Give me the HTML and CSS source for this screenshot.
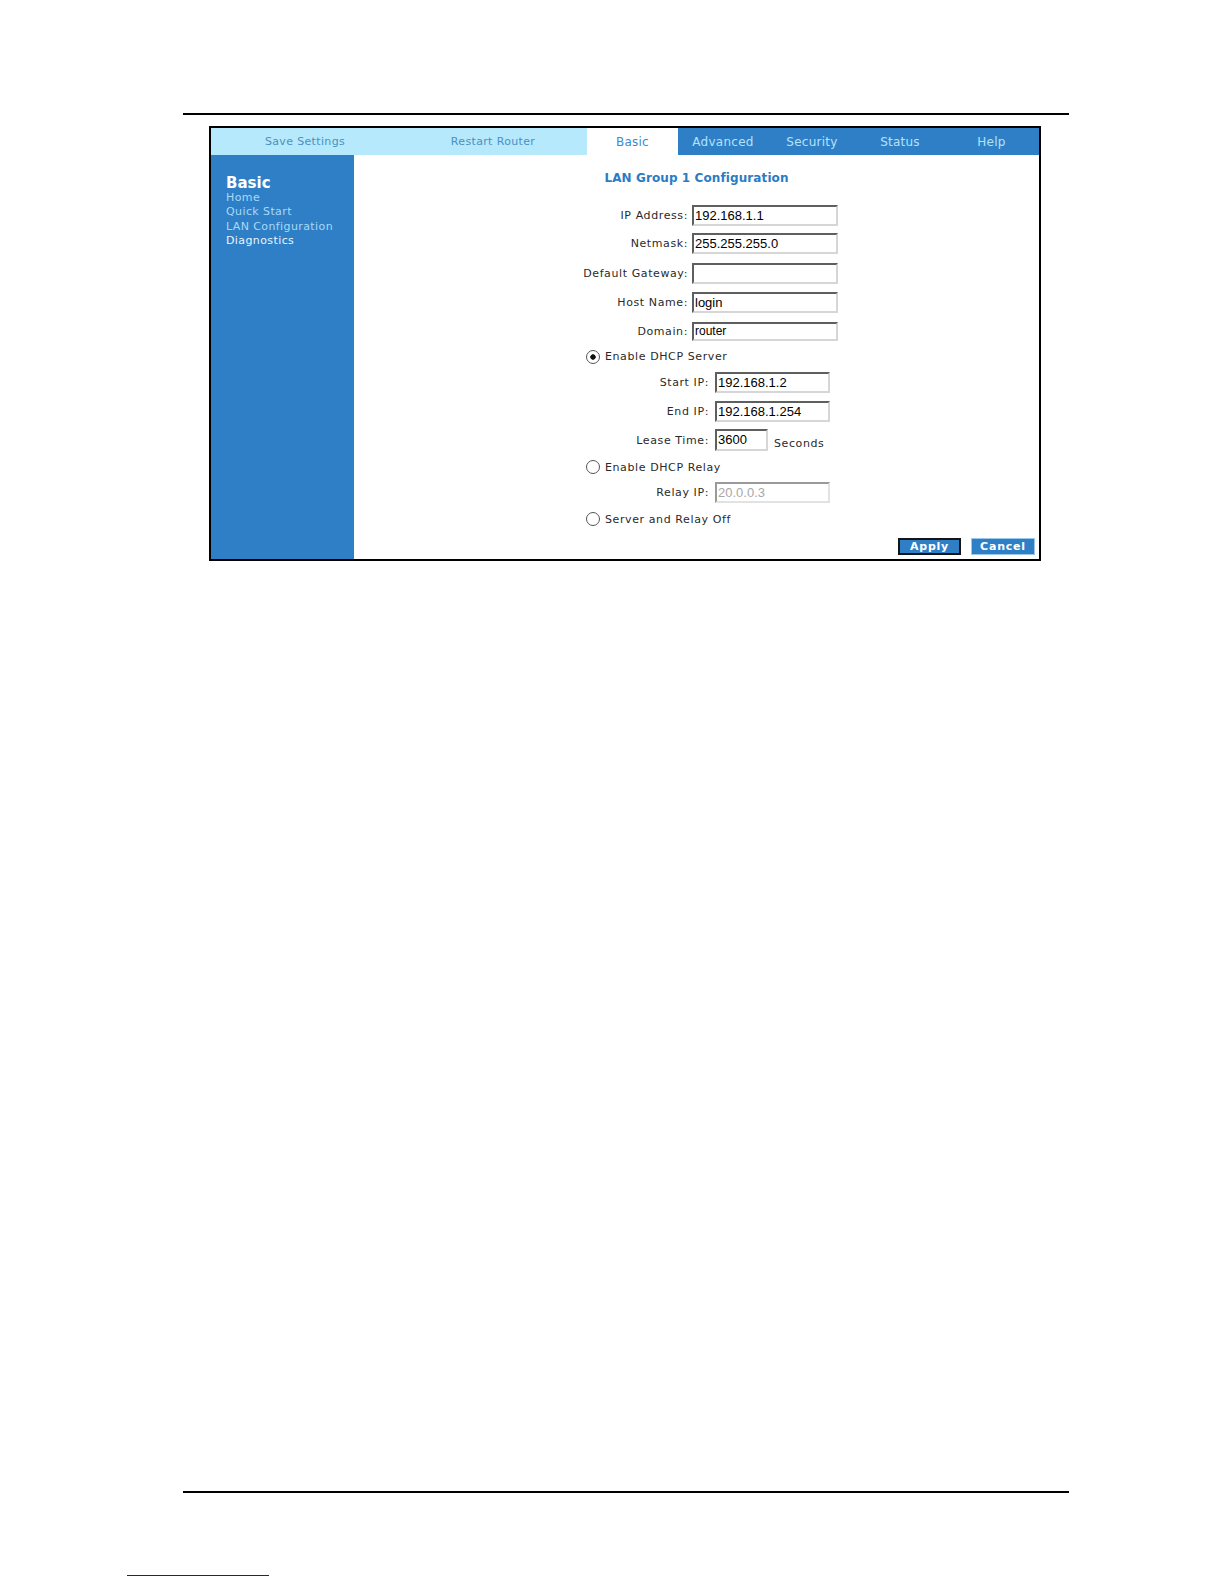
FILE: index.html
```html
<!DOCTYPE html>
<html>
<head>
<meta charset="utf-8">
<title>LAN Group 1 Configuration</title>
<link rel="stylesheet" href="styles.css">
</head>
<body>
<div class="page">
  <div class="rule top"></div>
  <div class="frame">
    <div class="tabs">
      <div class="tab light">Save Settings</div>
      <div class="tab light">Restart Router</div>
      <div class="tab active">Basic</div>
      <div class="tab dark">Advanced</div>
      <div class="tab dark">Security</div>
      <div class="tab dark">Status</div>
      <div class="tab dark">Help</div>
    </div>
    <div class="main">
      <div class="side">
        <div class="side-title">Basic</div>
        <div class="side-link">Home</div>
        <div class="side-link">Quick Start</div>
        <div class="side-link">LAN Configuration</div>
        <div class="side-link current">Diagnostics</div>
      </div>
      <div class="content">
        <div class="title">LAN Group 1 Configuration</div>
        <div class="row first">
          <span class="lbl">IP Address:</span>
          <div class="field">192.168.1.1</div>
        </div>
        <div class="row second">
          <span class="lbl">Netmask:</span>
          <div class="field">255.255.255.0</div>
        </div>
        <div class="row">
          <span class="lbl">Default Gateway:</span>
          <div class="field"></div>
        </div>
        <div class="row">
          <span class="lbl">Host Name:</span>
          <div class="field">login</div>
        </div>
        <div class="row domain">
          <span class="lbl clip"><span>Domain:</span></span>
          <div class="field small">router</div>
        </div>
        <div class="radio-row r-server">
          <span class="radio checked"></span>
          <span class="radio-text">Enable DHCP Server</span>
        </div>
        <div class="row sub start">
          <span class="lbl">Start IP:</span>
          <div class="field short">192.168.1.2</div>
        </div>
        <div class="row sub">
          <span class="lbl">End IP:</span>
          <div class="field short">192.168.1.254</div>
        </div>
        <div class="row sub lease">
          <span class="lbl">Lease Time:</span>
          <div class="field tiny">3600</div>
          <span class="unit">Seconds</span>
        </div>
        <div class="radio-row r-relay">
          <span class="radio"></span>
          <span class="radio-text">Enable DHCP Relay</span>
        </div>
        <div class="row sub relay">
          <span class="lbl">Relay IP:</span>
          <div class="field short disabled">20.0.0.3</div>
        </div>
        <div class="radio-row r-off">
          <span class="radio"></span>
          <span class="radio-text">Server and Relay Off</span>
        </div>
        <div class="buttons">
          <div class="btn apply">Apply</div>
          <div class="btn cancel">Cancel</div>
        </div>
      </div>
    </div>
  </div>
  <div class="rule foot"></div>
  <div class="link-line"></div>
</div>
</body>
</html>
```

FILE: styles.css
```css
html, body {
  margin: 0;
  padding: 0;
  background: #ffffff;
}

.page {
  width: 1224px;
  height: 1584px;
  overflow: hidden;
  padding-top: 113px;
  box-sizing: border-box;
  font-family: "DejaVu Sans", Verdana, sans-serif;
}

.rule {
  height: 2px;
  background: #000;
  margin-left: 183px;
  width: 886px;
}

.rule.foot {
  margin-top: 930px;
}

.link-line {
  margin-top: 82px;
  margin-left: 127px;
  width: 142px;
  height: 1px;
  background: #1c1c8a;
}

.frame {
  margin-top: 11px;
  margin-left: 209px;
  width: 832px;
  height: 435px;
  box-sizing: border-box;
  border: 2px solid #000;
  display: flex;
  flex-direction: column;
  background: #fff;
}

.tabs {
  height: 27px;
  display: grid;
  grid-template-columns: 188px 188px 91px 90px 88px 88px 1fr;
}

.tab {
  display: flex;
  align-items: center;
  justify-content: center;
  white-space: nowrap;
}

.tab.light {
  background: #b6e9fc;
  color: #4d8fbf;
  font-size: 11px;
  letter-spacing: 0.35px;
}

.tab.active {
  background: #ffffff;
  color: #3a8ad0;
  font-size: 12px;
  letter-spacing: 0.2px;
}

.tab.dark {
  background: #2f7fc7;
  color: #b4e2fa;
  font-size: 12px;
  letter-spacing: 0.25px;
}

.main {
  flex: 1;
  display: flex;
}

.side {
  width: 143px;
  background: #2f7fc7;
  padding: 19px 0 0 15px;
  box-sizing: border-box;
}

.side-title {
  color: #ffffff;
  font-weight: bold;
  font-size: 15px;
  line-height: 16px;
  margin-top: 1px;
}

.side-link {
  color: #a6daf7;
  font-size: 11px;
  line-height: 14.3px;
  letter-spacing: 0.4px;
}

.side-link.current {
  color: #e8f5fd;
}

.content {
  flex: 1;
  display: flex;
  flex-direction: column;
  color: #2a2a2a;
  font-size: 11px;
  letter-spacing: 0.6px;
}

.title {
  margin-top: 15px;
  line-height: 16px;
  text-align: center;
  font-weight: bold;
  font-size: 12px;
  color: #2a7cc4;
  letter-spacing: 0.1px;
}

.row {
  display: flex;
  align-items: center;
  height: 21px;
  margin-top: 8.5px;
}

.row.first {
  margin-top: 18.5px;
}

.row.second {
  margin-top: 7.5px;
}

.lbl {
  width: 334px;
  margin-right: 4px;
  text-align: right;
  white-space: nowrap;
}

.lbl.clip {
  display: block;
  height: 11px;
  overflow: hidden;
}

.lbl.clip > span {
  display: block;
  margin-top: -1px;
  line-height: 13px;
}

.row.domain {
  height: 19px;
}

.field {
  width: 146px;
  height: 21px;
  box-sizing: border-box;
  border-top: 2px solid #5f5f5f;
  border-left: 2px solid #5f5f5f;
  border-right: 2px solid #d6d6d6;
  border-bottom: 2px solid #d6d6d6;
  background: #fff;
  color: #000;
  font-family: "Liberation Sans", Arial, sans-serif;
  font-size: 13px;
  line-height: 17px;
  letter-spacing: 0;
  padding-left: 1px;
  white-space: nowrap;
  overflow: hidden;
}

.field.small {
  height: 19px;
  font-size: 12px;
  line-height: 15px;
}

.row.sub .lbl {
  width: 355px;
  margin-right: 6px;
}

.field.short {
  width: 115px;
}

.field.tiny {
  width: 53px;
  height: 22px;
  line-height: 18px;
}

.row.lease {
  height: 22px;
  margin-top: 7px;
}

.unit {
  align-self: flex-end;
  margin-left: 6px;
  line-height: 14px;
}

.field.disabled {
  color: #a8a8a8;
  border-top-color: #9a9a9a;
  border-left-color: #9a9a9a;
  border-right-color: #e2e2e2;
  border-bottom-color: #e2e2e2;
}

.row.start {
  margin-top: 8px;
}

.row.relay {
  margin-top: 8px;
}

.radio-row {
  display: flex;
  align-items: center;
  height: 14px;
  padding-left: 232px;
}

.r-server { margin-top: 9px; }
.r-relay { margin-top: 9px; }
.r-off { margin-top: 9px; }

.radio {
  width: 14px;
  height: 14px;
  box-sizing: border-box;
  border-radius: 50%;
  border: 1.6px solid #555;
  background: #fff;
  margin-right: 5px;
  flex: none;
}

.radio.checked {
  background: radial-gradient(circle, #111 0, #111 2.4px, #fff 3px);
}

.radio-text {
  white-space: nowrap;
}

.buttons {
  margin-top: 12px;
  display: flex;
  justify-content: flex-end;
  gap: 10px;
  padding-right: 4px;
}

.btn {
  height: 17px;
  box-sizing: border-box;
  background: #2f7fc7;
  color: #fff;
  font-weight: bold;
  font-size: 11px;
  letter-spacing: 0.8px;
  display: flex;
  align-items: center;
  justify-content: center;
}

.btn.apply {
  width: 63px;
  border: 2px solid #151515;
}

.btn.cancel {
  width: 64px;
  border: 1px solid #9cc8ea;
}
```
